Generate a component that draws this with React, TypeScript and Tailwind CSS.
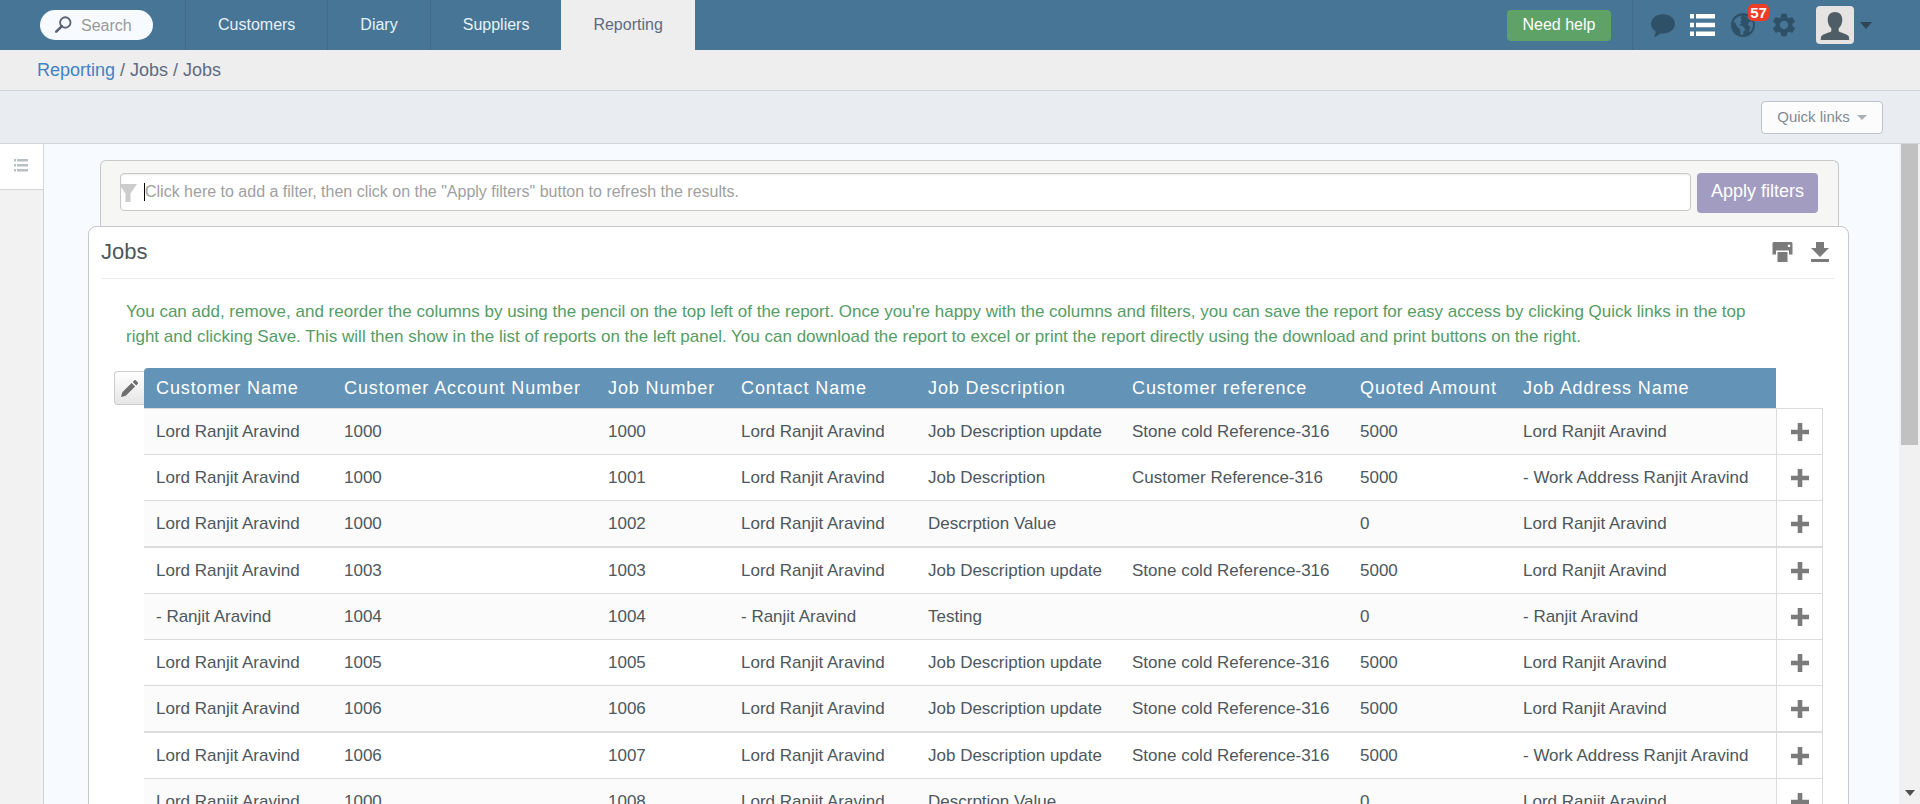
import React from "react";
import { MdSettings } from "react-icons/md";

const columns = [
  { name: "Customer Name", width: "w-[188px]" },
  { name: "Customer Account Number", width: "w-[264px]" },
  { name: "Job Number", width: "w-[133px]" },
  { name: "Contact Name", width: "w-[187px]" },
  { name: "Job Description", width: "w-[204px]" },
  { name: "Customer reference", width: "w-[228px]" },
  { name: "Quoted Amount", width: "w-[163px]" },
  { name: "Job Address Name", width: "w-[265px]" },
];

const lord = "Lord Ranjit Aravind";
const update = "Job Description update";
const stone = "Stone cold Reference-316";
const work = "- Work Address Ranjit Aravind";

const rows: string[][] = [
  [lord, "1000", "1000", lord, update, stone, "5000", lord],
  [lord, "1000", "1001", lord, "Job Description", "Customer Reference-316", "5000", work],
  [lord, "1000", "1002", lord, "Descrption Value", "", "0", lord],
  [lord, "1003", "1003", lord, update, stone, "5000", lord],
  ["- Ranjit Aravind", "1004", "1004", "- Ranjit Aravind", "Testing", "", "0", "- Ranjit Aravind"],
  [lord, "1005", "1005", lord, update, stone, "5000", lord],
  [lord, "1006", "1006", lord, update, stone, "5000", lord],
  [lord, "1006", "1007", lord, update, stone, "5000", work],
  [lord, "1000", "1008", lord, "Descrption Value", "", "0", lord],
];

function rowLine(i: number) {
  if (i === 0) return "h-[47px] border-t border-b";
  return i % 4 === 2 ? "h-[47px] border-b-2" : "h-[46px] border-b";
}

function NavBar() {
  const link = "flex items-center border-l border-[#3f6a8a] px-8 text-[#e8f1f8]";
  return (
    <header className="flex h-[50px] shrink-0 items-stretch bg-[#477596] text-base">
      <div className="flex w-[185px] items-center pl-10">
        <label className="flex h-[30px] w-[113px] items-center rounded-full bg-[#f7faff] pl-[15px]">
          <svg viewBox="0 0 17 17" className="mr-[9px] mb-0.5 size-[17px] shrink-0 text-[#5b6377]" fill="none" stroke="currentColor" aria-hidden="true">
            <circle cx="10.3" cy="6.5" r="5.2" strokeWidth="1.9" />
            <path d="M6.800 10.200 1.200 15.600" strokeWidth="2.6" strokeLinecap="round" />
          </svg>
          <input aria-label="Search" placeholder="Search" className="mt-0.5 w-16 bg-transparent outline-none placeholder:text-[#999999]" />
        </label>
      </div>
      <nav className="flex">
        <a href="#customers" className={link}>Customers</a>
        <a href="#diary" className={link}>Diary</a>
        <a href="#suppliers" className={link}>Suppliers</a>
        <a href="#reporting" className="flex items-center bg-[#eeeeee] px-8 text-[#5f6a80]">Reporting</a>
      </nav>
      <div className="ml-auto flex items-center pr-12">
        <button className="h-[31px] w-[104px] rounded bg-[#5fa268] text-white">Need help</button>
        <span className="ml-[21px] h-full border-l border-[#3f6a8a]" />
        <button aria-label="Messages" className="ml-[18px] text-[#2f5168]">
          <svg viewBox="0 0 24 23" className="h-[23px] w-6" fill="currentColor" aria-hidden="true">
            <path d="M12 .2c6.700 0 12 4.200 12 9.600s-5.300 9.800-12 9.800c-.9 0-1.700-.1-2.500-.2-1.900 1.900-4.400 3.200-6.700 3.300.9-1.300 1.900-3.300 1.900-5.100C1.800 15.800 0 13 0 9.800 0 4.400 5.300.2 12 .2z" />
          </svg>
        </button>
        <button aria-label="Lists" className="ml-[15px] text-white">
          <svg viewBox="0 0 25 22" className="h-[22px] w-[25px]" fill="currentColor" aria-hidden="true">
            <path d="M0 0h4v4.600H0zM6 0h19v4.600H6zM0 8.700h4v4.600H0zM6 8.700h19v4.600H6zM0 17.400h4V22H0zM6 17.400h19V22H6z" />
          </svg>
        </button>
        <button aria-label="Notifications" className="relative ml-4 text-[#2f5168]">
          <svg viewBox="0 0 24 24" className="size-6" aria-hidden="true">
            <circle cx="12" cy="12" r="12" fill="currentColor" />
            <path d="M2.500 9C4 5.500 7 3 11 2.500L9.500 5l1.500 1.500-2 2.500 1.500 1.500L8 12.500l3.500.5 3 3.500-2 2-.5 3.500-2.500-.5-.5-5.500L6 13.500 4.500 10z" fill="#477596" />
            <path d="M14 3c3 .5 6 2.500 7 5.500l-3 .5-1 3 2.500 2-1.500 4.500 1 .5c3-3 3.500-7 2.500-10z" fill="#477596" />
          </svg>
          <span className="absolute -top-[9px] left-[17px] flex h-[17px] w-[21px] items-center justify-center rounded-[5px] bg-[#ee3d26] text-[15px] leading-none font-bold text-white">57</span>
        </button>
        <button aria-label="Settings" className="ml-[15px] text-[#2f5168]">
          <MdSettings className="size-7" />
        </button>
        <button aria-label="Account" className="ml-[18px] flex items-center gap-[6px] text-[#2f4656]">
          <span className="flex size-[38px] items-end justify-center rounded bg-[#e6e3e3] pb-1">
            <svg viewBox="0 0 30 28" className="h-7 w-[30px] text-[#4e5d66]" fill="currentColor" aria-hidden="true">
              <path d="M15 0c4.500 0 7.300 3 7.300 7.500 0 4-1.500 7-3.600 8.800v3c2.500 1.800 9.300 3 10.100 5.200.3 1 .4 2.300.4 3.500H.8c0-1.200.1-2.500.4-3.500.8-2.200 7.600-3.400 10.100-5.200v-3C9.200 14.500 7.700 11.500 7.700 7.500 7.700 3 10.500 0 15 0z" />
            </svg>
          </span>
          <svg viewBox="0 0 12 7" className="h-[7px] w-3" fill="currentColor" aria-hidden="true"><path d="M0 0h12L6 7z" /></svg>
        </button>
      </div>
    </header>
  );
}

function FilterBar() {
  return (
    <form className="ml-3 mr-[10px] flex gap-[6px] rounded-t-md border border-b-0 border-[#c6c8ca] bg-[#f6f6f5] pt-3 pr-5 pb-[13px] pl-[19px]">
      <label className="flex h-[38px] min-w-0 flex-1 items-center rounded border border-[#c8c8c8] bg-white shadow-[inset_0_1px_2px_rgba(0,0,0,0.08)]">
        <svg viewBox="0 0 16 18" className="mt-0.5 h-[18px] w-4 shrink-0" fill="#cccccc" aria-hidden="true"><path d="M0 0h16l-6.500 9.500V18h-5V9.500L0 3z" /></svg>
        <span className="ml-[7px] h-[18px] border-l border-black" />
        <input
          aria-label="Add a filter"
          placeholder={'Click here to add a filter, then click on the "Apply filters" button to refresh the results.'}
          className="min-w-0 flex-1 bg-transparent text-base outline-none placeholder:text-[#a0a0a0]"
        />
      </label>
      <button type="button" className="h-10 w-[121px] rounded bg-[#a39cc1] pb-1 text-lg leading-6 text-white">Apply filters</button>
    </form>
  );
}

function JobsTable() {
  return (
    <div className="flex items-start pr-[25px] pl-[25px]">
      <button aria-label="Edit columns" className="mt-[3px] flex h-[34px] w-[30px] shrink-0 items-center justify-center rounded-l border border-r-0 border-[#cccccc] bg-gradient-to-b from-white to-[#e6e6e6] text-[#6e6e6e]">
        <svg viewBox="0 0 17 17" className="size-[17px]" fill="currentColor" aria-hidden="true">
          <path d="M0 17l1.300-4.800L10.600 3l3.500 3.500-9.300 9.300zM11.700 1.900L13.200.4c.5-.5 1.200-.5 1.700 0l1.800 1.800c.5.5.5 1.200 0 1.700l-1.500 1.500z" />
        </svg>
      </button>
      <table className="w-full table-fixed border-separate border-spacing-0 text-left text-[17px] leading-6 text-[#4d575d]">
        <thead>
          <tr className="h-10 text-lg leading-6 tracking-wider text-white">
            {columns.map((c) => (
              <th key={c.name} className={`${c.width} bg-[#6393b6] pl-3 font-normal whitespace-nowrap first:rounded-tl`}>
                {c.name}
              </th>
            ))}
            <th aria-label="Actions" className="w-[47px]" />
          </tr>
        </thead>
        <tbody>
          {rows.map((row, i) => (
            <tr key={i} className="odd:bg-[#fbfbfb]">
              {row.map((cell, j) => (
                <td key={j} className={`${rowLine(i)} border-[#dcdcdc] pl-3 whitespace-nowrap`}>{cell}</td>
              ))}
              <td className={`${rowLine(i)} border-x border-[#dcdcdc] bg-white`}>
                <button aria-label="Expand row" className="mx-auto block text-[#7b7b7b]">
                  <svg viewBox="0 0 18 18" className="size-[18px]" fill="currentColor" aria-hidden="true"><path d="M6.700 0h4.600v6.700H18v4.600h-6.700V18H6.700v-6.700H0V6.700h6.700z" /></svg>
                </button>
              </td>
            </tr>
          ))}
        </tbody>
      </table>
    </div>
  );
}

export default function App() {
  return (
    <div className="flex h-screen flex-col overflow-hidden bg-[#f7faff] font-['Liberation_Sans',Arial,sans-serif]">
      <NavBar />
      <div className="flex h-[41px] shrink-0 items-center border-b border-[#d2d6da] bg-[#eeeeee] pl-[37px] text-lg leading-6 text-[#5f6a80]">
        <p><a href="#reporting" className="text-[#3f83c4]">Reporting</a> / Jobs / Jobs</p>
      </div>
      <div className="flex h-[53px] shrink-0 items-center justify-end border-b border-[#d2d6da] bg-[#e9ecf1] pr-[37px]">
        <button className="flex h-[33px] w-[122px] items-center justify-center gap-[7px] rounded border border-[#bcc3ca] bg-[#fcfcfc] text-[15px] text-[#7f8b95]">
          Quick links
          <svg viewBox="0 0 10 5" className="h-[5px] w-[10px]" fill="#aab0b5" aria-hidden="true"><path d="M0 0h10L5 5z" /></svg>
        </button>
      </div>
      <div className="flex min-h-0 flex-1">
        <aside className="w-11 shrink-0 border-r border-[#d2d6da] bg-[#f2f2f2]">
          <button aria-label="Reports list" className="flex h-[46px] w-full items-center border-b border-[#d2d6da] bg-white pb-0.5 pl-[14px] text-[#b9c0c4]">
            <svg viewBox="0 0 14 13" className="h-[13px] w-[14px]" fill="currentColor" aria-hidden="true">
              <path d="M0 0h2v2.500H0zM3 0h11v2.500H3zM0 5h2v2.500H0zM3 5h11v2.500H3zM0 10h2v2.500H0zM3 10h11v2.500H3z" />
            </svg>
          </button>
        </aside>
        <main className="min-w-0 flex-1 overflow-hidden pt-4 pr-[50px] pl-11">
          <FilterBar />
          <section className="rounded-t-lg border border-[#c6c8ca] bg-white pb-10">
            <div className="mr-[13px] ml-3 flex h-[52px] items-center justify-between border-b border-[#ececec] pr-[6px] pb-0.5">
              <h1 className="text-[22px] text-[#4d575d]">Jobs</h1>
              <div className="flex gap-[18px] text-[#7b7b7b]">
                <button aria-label="Print">
                  <svg viewBox="0 0 21 20" className="h-5 w-[21px]" fill="currentColor" aria-hidden="true">
                    <path fillRule="evenodd" d="M1.500 0h17.500q1.500 0 1.500 1.500v11H17V8.500H4v4H.500v-11Q.500 0 1.500 0zM17 2.500a1.300 1.300 0 1 0 .1 0z" />
                    <path d="M5.500 10h10v10h-10z" />
                  </svg>
                </button>
                <button aria-label="Download">
                  <svg viewBox="0 0 18 20" className="h-5 w-[18px]" fill="currentColor" aria-hidden="true">
                    <path d="M5 0h8v6h5l-9 9-9-9h5zM0 17h18v3H0z" />
                  </svg>
                </button>
              </div>
            </div>
            <p className="mt-5 mr-20 mb-[19px] ml-[37px] text-[17px] leading-[25px] text-[#559c66]">
              You can add, remove, and reorder the columns by using the pencil on the top left of the report. Once you're happy with the columns and filters, you can save the report for easy access by clicking Quick links in the top right and clicking Save. This will then show in the list of reports on the left panel. You can download the report to excel or print the report directly using the download and print buttons on the right.
            </p>
            <JobsTable />
          </section>
        </main>
        <div className="flex w-[21px] shrink-0 flex-col items-center justify-between bg-[#f1f1f1] pb-2" aria-hidden="true">
          <div className="h-[301px] w-[17px] bg-[#c1c1c1]" />
          <svg viewBox="0 0 10 6" className="h-[6px] w-[10px]" fill="#505050"><path d="M0 0h10L5 6z" /></svg>
        </div>
      </div>
    </div>
  );
}
